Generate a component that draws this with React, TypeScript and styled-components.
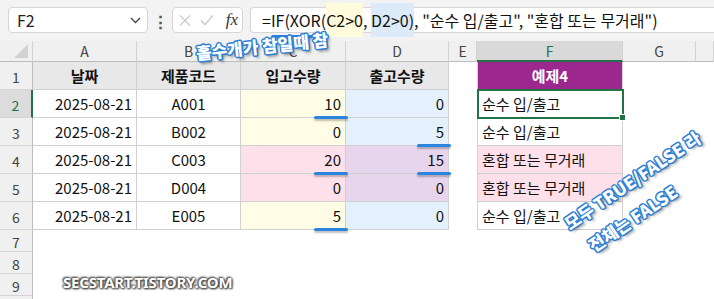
import styled, { createGlobalStyle, css } from "styled-components";

const GlobalStyle = createGlobalStyle`
  html, body {
    margin: 0;
    padding: 0;
    background: #ffffff;
  }
  body {
    font-family: "Noto Sans CJK KR", "Noto Sans", sans-serif;
    overflow: hidden;
  }
`;

const Page = styled.div`
  position: relative;
  width: 714px;
  height: 299px;
  overflow: hidden;
  background: #ffffff;
`;

const FormulaBar = styled.div`
  height: 41px;
  box-sizing: border-box;
  padding: 7px 0 8px 8px;
  display: flex;
  align-items: stretch;
  background: #f3f3f3;
`;

const Box = styled.div`
  background: #ffffff;
  border: 1px solid #d6d6d6;
  border-radius: 4px;
  box-sizing: border-box;
  display: flex;
  align-items: center;
`;

const NameBox = styled(Box)`
  width: 140px;
  padding: 0 6px 0 8px;
  justify-content: space-between;
  font-size: 16px;
  color: #222;
`;

const Dots = styled.div`
  width: 24px;
  display: flex;
  align-items: center;
  justify-content: center;
  font-size: 17px;
  font-weight: bold;
  color: #555;
`;

const FxBox = styled(Box)`
  width: 71px;
  padding: 0 4px 0 6px;
  gap: 9px;
`;

const Fx = styled.span`
  font-family: "Liberation Serif", "DejaVu Serif", serif;
  font-style: italic;
  font-size: 17px;
  color: #333;
  margin-left: 3px;
`;

const FormulaInput = styled(Box)`
  flex: 1;
  margin-left: 7px;
  border-right: none;
  border-radius: 4px 0 0 4px;
  padding-left: 11px;
  font-size: 16px;
  color: #111;
  white-space: pre;
`;

const Ref = styled.span<{ $bg: string }>`
  background: ${p => p.$bg};
  padding: 5px 0;
`;

const Marked = styled.span`
  position: relative;
  &::after {
    content: "";
    position: absolute;
    left: 0;
    right: -2px;
    bottom: -6px;
    height: 3px;
    border-radius: 2px;
    background: #2b85df;
    box-shadow: 0 2px 2px rgba(0, 0, 0, 0.25);
  }
`;

const Grid = styled.div`
  display: grid;
  grid-template-columns: 33px 104px 104px 105px 103px 28px 146px 73px 1fr;
  grid-template-rows: 21px repeat(6, 28px) repeat(3, 22px) 1fr;
  height: 258px;
`;

const Corner = styled.div`
  position: relative;
  background: #f0f0f0;
  border-right: 1px solid #d3d3d3;
  border-bottom: 1px solid #bcbcbc;
  box-sizing: border-box;
  &::after {
    content: "";
    position: absolute;
    right: 4px;
    bottom: 3px;
    border-left: 14px solid transparent;
    border-bottom: 14px solid #d2d2d2;
  }
`;

const ColHead = styled.div<{ $active?: boolean }>`
  background: ${p => (p.$active ? "#d9d9d9" : "#f0f0f0")};
  border-right: 1px solid #d3d3d3;
  border-bottom: ${p => (p.$active ? "2px solid #217346" : "1px solid #bcbcbc")};
  box-sizing: border-box;
  display: flex;
  align-items: center;
  justify-content: center;
  font-size: 14px;
  color: ${p => (p.$active ? "#217346" : "#444")};
`;

const RowHead = styled.div<{ $active?: boolean }>`
  background: ${p => (p.$active ? "#dcdcdc" : "#f0f0f0")};
  border-right: ${p => (p.$active ? "2px solid #217346" : "1px solid #bcbcbc")};
  border-bottom: 1px solid #d6d6d6;
  box-sizing: border-box;
  display: flex;
  align-items: center;
  justify-content: center;
  padding-top: 3px;
  font-size: 14px;
  color: ${p => (p.$active ? "#217346" : "#444")};
`;

const Cell = styled.div<{
  $bg?: string;
  $align?: "left" | "center" | "right";
  $bold?: boolean;
  $lined?: boolean;
  $left?: boolean;
  $mark?: boolean;
  $selected?: boolean;
  $color?: string;
}>`
  position: relative;
  box-sizing: border-box;
  background: ${p => p.$bg || "#ffffff"};
  display: flex;
  align-items: center;
  justify-content: ${p =>
    p.$align === "right" ? "flex-end" : p.$align === "center" ? "center" : "flex-start"};
  padding: 0 4px;
  font-size: 15px;
  font-weight: ${p => (p.$bold ? 700 : 400)};
  color: ${p => p.$color || "#111"};
  white-space: nowrap;
  ${p =>
    p.$lined &&
    css`
      border-right: 1px solid #d0d0d0;
      border-bottom: 1px solid #d0d0d0;
    `}
  ${p =>
    p.$left &&
    css`
      border-left: 1px solid #d0d0d0;
    `}
  ${p =>
    p.$mark &&
    css`
      &::after {
        content: "";
        position: absolute;
        right: -3px;
        bottom: -2px;
        width: 34px;
        height: 3px;
        border-radius: 2px;
        background: #2b85df;
        box-shadow: 0 2px 2px rgba(0, 0, 0, 0.25);
        z-index: 2;
      }
    `}
  ${p =>
    p.$selected &&
    css`
      &::before {
        content: "";
        position: absolute;
        left: -1px;
        top: -1px;
        right: -2px;
        bottom: -2px;
        border: 2px solid #217346;
        z-index: 3;
      }
      &::after {
        content: "";
        position: absolute;
        right: -4px;
        bottom: -4px;
        width: 5px;
        height: 5px;
        background: #217346;
        border: 1px solid #ffffff;
        z-index: 4;
      }
    `}
`;

const Note = styled.div<{ $rotate: number; $size: number }>`
  position: absolute;
  transform: rotate(${p => p.$rotate}deg);
  transform-origin: left center;
  font-family: "Noto Sans CJK KR", "Noto Sans", sans-serif;
  font-weight: 900;
  font-size: ${p => p.$size}px;
  line-height: 22px;
  color: #ffffff;
  white-space: nowrap;
  text-shadow:
    -1px -1px 0 #2a7fd6, 1px -1px 0 #2a7fd6, -1px 1px 0 #2a7fd6, 1px 1px 0 #2a7fd6,
    0 -1.5px 0 #2a7fd6, 0 1.5px 0 #2a7fd6, -1.5px 0 0 #2a7fd6, 1.5px 0 0 #2a7fd6,
    2px 3px 3px rgba(0, 0, 0, 0.45);
  z-index: 10;
`;

const Watermark = styled.div`
  position: absolute;
  left: 63px;
  top: 272px;
  font-family: "Noto Sans", "DejaVu Sans", sans-serif;
  font-weight: 700;
  font-size: 15px;
  color: #ffffff;
  text-shadow:
    0 0 2px #444, 0 0 3px #444, 1px 1px 2px #333, -1px -1px 2px #555;
  letter-spacing: -0.2px;
  z-index: 10;
`;

type Fill = "yellow" | "blue" | "pink" | "violet" | "white";

const fills: Record<Fill, string> = {
  yellow: "#fffde6",
  blue: "#e4f0fc",
  pink: "#fde0ea",
  violet: "#e6d5ec",
  white: "#ffffff",
};

interface IRow {
  date: string;
  code: string;
  inQty: string;
  outQty: string;
  inFill: Fill;
  outFill: Fill;
  result: string;
  resFill: Fill;
  markIn?: boolean;
  markOut?: boolean;
}

const rows: IRow[] = [
  { date: "2025-08-21", code: "A001", inQty: "10", outQty: "0", inFill: "yellow", outFill: "blue", result: "순수 입/출고", resFill: "white", markIn: true },
  { date: "2025-08-21", code: "B002", inQty: "0", outQty: "5", inFill: "yellow", outFill: "blue", result: "순수 입/출고", resFill: "white", markOut: true },
  { date: "2025-08-21", code: "C003", inQty: "20", outQty: "15", inFill: "pink", outFill: "violet", result: "혼합 또는 무거래", resFill: "pink", markIn: true, markOut: true },
  { date: "2025-08-21", code: "D004", inQty: "0", outQty: "0", inFill: "pink", outFill: "violet", result: "혼합 또는 무거래", resFill: "pink" },
  { date: "2025-08-21", code: "E005", inQty: "5", outQty: "0", inFill: "yellow", outFill: "blue", result: "순수 입/출고", resFill: "white", markIn: true },
];

const letters = ["A", "B", "C", "D", "E", "F", "G", ""];

function Chevron() {
  return (
    <svg width="11" height="7" viewBox="0 0 11 7">
      <path d="M1 1l4.5 4.5L10 1" fill="none" stroke="#444" strokeWidth="1.3" />
    </svg>
  );
}

function CrossIcon() {
  return (
    <svg width="13" height="13" viewBox="0 0 13 13">
      <path d="M1 1l11 11M12 1L1 12" stroke="#c4c4c4" strokeWidth="1.3" />
    </svg>
  );
}

function CheckIcon() {
  return (
    <svg width="15" height="12" viewBox="0 0 15 12">
      <path d="M1 6.5l4.5 4.5L14 1" fill="none" stroke="#c4c4c4" strokeWidth="1.3" />
    </svg>
  );
}

function App() {
  return (
    <Page>
      <GlobalStyle />
      <FormulaBar>
        <NameBox>
          F2
          <Chevron />
        </NameBox>
        <Dots>⋮</Dots>
        <FxBox>
          <CrossIcon />
          <CheckIcon />
          <Fx>fx</Fx>
        </FxBox>
        <FormulaInput>
          {"="}
          <Marked>IF(XOR</Marked>
          {"("}
          <Ref $bg="#fffbdc">C2&gt;0</Ref>
          {", "}
          <Ref $bg="#dceafa">D2&gt;0)</Ref>
          {', "순수 입/출고", "혼합 또는 무거래")'}
        </FormulaInput>
      </FormulaBar>

      <Grid>
        <Corner />
        {letters.map((l, i) => (
          <ColHead key={i} $active={l === "F"}>
            {l}
          </ColHead>
        ))}

        <RowHead>1</RowHead>
        <Cell $lined $bold $align="center" $bg="#e8e8e8">날짜</Cell>
        <Cell $lined $bold $align="center" $bg="#e8e8e8">제품코드</Cell>
        <Cell $lined $bold $align="center" $bg="#e8e8e8">입고수량</Cell>
        <Cell $lined $bold $align="center" $bg="#e8e8e8">출고수량</Cell>
        <Cell />
        <Cell $lined $left $bold $align="center" $bg="#9c278f" $color="#ffffff">
          예제4
        </Cell>
        <Cell />
        <Cell />

        {rows.map((r, i) => (
          <Row key={r.code} row={r} index={i + 2} />
        ))}

        {[7, 8, 9].map(n => (
          <EmptyRow key={n} n={n} />
        ))}
        <RowHead />
      </Grid>

      <Note $rotate={-6} $size={17} style={{ left: 196, top: 42 }}>
        홀수개가 참일때 참
      </Note>
      <Note $rotate={-34} $size={17} style={{ left: 566, top: 214 }}>
        모두 TRUE/FALSE 라
      </Note>
      <Note $rotate={-34} $size={17} style={{ left: 590, top: 236 }}>
        전체는 FALSE
      </Note>
      <Watermark>SECSTART.TISTORY.COM</Watermark>
    </Page>
  );
}

function Row({ row, index }: { row: IRow; index: number }) {
  return (
    <>
      <RowHead $active={index === 2}>{index}</RowHead>
      <Cell $lined $align="right">{row.date}</Cell>
      <Cell $lined $align="center">{row.code}</Cell>
      <Cell $lined $align="right" $bg={fills[row.inFill]} $mark={row.markIn}>
        {row.inQty}
      </Cell>
      <Cell $lined $align="right" $bg={fills[row.outFill]} $mark={row.markOut}>
        {row.outQty}
      </Cell>
      <Cell />
      <Cell $lined $left $bg={fills[row.resFill]} $selected={index === 2}>
        {row.result}
      </Cell>
      <Cell />
      <Cell />
    </>
  );
}

function EmptyRow({ n }: { n: number }) {
  return (
    <>
      <RowHead>{n}</RowHead>
      {letters.map((_, i) => (
        <Cell key={i} />
      ))}
    </>
  );
}

export default App;
